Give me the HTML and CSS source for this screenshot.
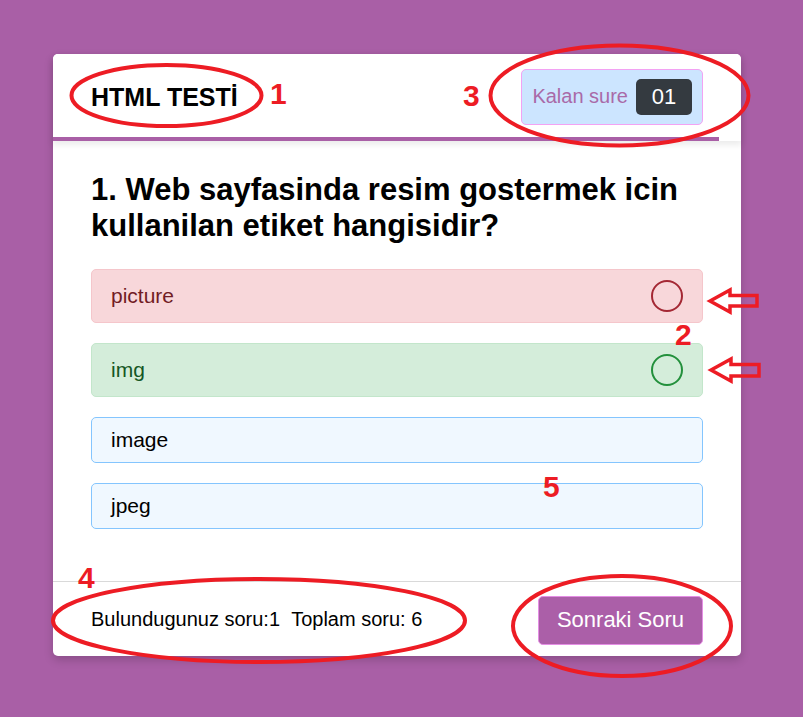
FILE: index.html
```html
<!DOCTYPE html>
<html lang="tr">
<head>
<meta charset="utf-8">
<title>HTML Testi</title>
<link rel="stylesheet" href="styles.css">
</head>
<body>
<div class="quiz-box">
  <header class="quiz-header">
    <div class="title">HTML TESTİ</div>
    <div class="timer">
      <span class="timer-text">Kalan sure</span>
      <span class="timer-sec">01</span>
    </div>
    <div class="time-line" style="width:666px"></div>
  </header>
  <section class="quiz-body">
    <div class="question">1. Web sayfasinda resim gostermek icin kullanilan etiket hangisidir?</div>
    <div class="option-list">
      <div class="option incorrect"><span>picture</span><span class="icon cross"></span></div>
      <div class="option correct"><span>img</span><span class="icon tick"></span></div>
      <div class="option"><span>image</span></div>
      <div class="option"><span>jpeg</span></div>
    </div>
  </section>
  <footer class="quiz-footer">
    <div class="total">Bulundugunuz soru:1&nbsp;&nbsp;Toplam soru: 6</div>
    <button class="next-btn">Sonraki Soru</button>
  </footer>
</div>

<svg class="annotations" width="803" height="717" viewBox="0 0 803 717" xmlns="http://www.w3.org/2000/svg">
  <g fill="none" stroke="#ed1c24" stroke-width="4">
    <ellipse cx="166.5" cy="95.5" rx="95" ry="30.5"/>
    <ellipse cx="619.5" cy="95.5" rx="129" ry="50"/>
    <ellipse cx="259" cy="620.5" rx="206" ry="41.5"/>
    <ellipse cx="622" cy="626" rx="109" ry="50"/>
  </g>
  <g fill="none" stroke="#ed1c24" stroke-width="3.5" stroke-linejoin="miter">
    <path d="M710 301 L730 290 L730 295.5 L757 295.5 L757 306 L730 306 L730 312 Z"/>
    <path d="M711 370 L731 359 L731 364.5 L759 364.5 L759 376 L731 376 L731 381 Z"/>
  </g>
  <g class="num" fill="#ed1c24">
    <text x="270" y="104">1</text>
    <text x="463" y="106">3</text>
    <text x="675" y="345">2</text>
    <text x="543" y="497">5</text>
    <text x="78" y="588">4</text>
  </g>
</svg>
</body>
</html>
```

FILE: styles.css
```css
* {
  box-sizing: border-box;
}

html, body {
  margin: 0;
  padding: 0;
}

body {
  background: #a95fa6;
  font-family: "Liberation Sans", Arial, sans-serif;
  width: 803px;
  height: 717px;
  padding: 54px 0 0 53px;
  position: relative;
  overflow: hidden;
}

.quiz-box {
  width: 688px;
  background: #fff;
  border-radius: 5px;
  box-shadow: 0 4px 10px rgba(0, 0, 0, 0.18);
}

.quiz-header {
  position: relative;
  z-index: 2;
  height: 87px;
  padding: 0 38px;
  display: flex;
  align-items: center;
  justify-content: space-between;
  background: #fff;
  border-radius: 5px 5px 0 0;
  box-shadow: 0 3px 6px 1px rgba(0, 0, 0, 0.08);
}

.title {
  font-size: 25px;
  font-weight: bold;
  color: #000;
}

.timer {
  display: flex;
  align-items: center;
  gap: 8px;
  height: 56px;
  padding: 0 10px 0 10px;
  background: #cce5ff;
  border: 1px solid #f3a2f3;
  border-radius: 5px;
  margin-top: -2px;
}

.timer-text {
  font-size: 20px;
  color: #a96aa8;
}

.timer-sec {
  width: 56px;
  height: 36px;
  display: flex;
  align-items: center;
  justify-content: center;
  background: #343a40;
  color: #fff;
  font-size: 22px;
  border-radius: 5px;
}

.time-line {
  position: absolute;
  left: 0;
  bottom: 0;
  height: 4px;
  background: #a95fa6;
}

.quiz-body {
  padding: 31px 38px 12px;
}

.question {
  font-size: 31px;
  font-weight: bold;
  line-height: 36px;
  color: #000;
}

.option-list {
  margin-top: 25px;
  padding-bottom: 20px;
}

.option {
  display: flex;
  align-items: center;
  justify-content: space-between;
  padding: 10px 19px;
  margin-bottom: 20px;
  font-size: 21px;
  line-height: 24px;
  color: #000;
  background: #f0f8ff;
  border: 1px solid #84c5fe;
  border-radius: 5px;
}

.option.correct {
  color: #155724;
  background: #d4edda;
  border-color: #c3e6cb;
}

.option.incorrect {
  color: #721c24;
  background: #f8d7da;
  border-color: #f5c6cb;
}

.icon {
  width: 32px;
  height: 32px;
  border-radius: 50%;
  border: 2px solid transparent;
}

.icon.tick {
  border-color: #23903c;
  background: #d4edda;
}

.icon.cross {
  border-color: #a42834;
  background: #f8d7da;
}

.quiz-footer {
  height: 75px;
  border-top: 1px solid #d9d9d9;
  padding: 0 38px;
  display: flex;
  align-items: center;
  justify-content: space-between;
}

.total {
  font-size: 20px;
  color: #000;
}

.next-btn {
  width: 165px;
  height: 49px;
  margin-top: 2px;
  background: #ab5fa8;
  border: 1px solid #e48ee4;
  border-radius: 5px;
  color: #fff;
  font-family: "Liberation Sans", Arial, sans-serif;
  font-size: 22px;
  padding: 0;
}

.annotations {
  position: absolute;
  left: 0;
  top: 0;
  z-index: 10;
  pointer-events: none;
}

.num text {
  font-family: "Liberation Sans", Arial, sans-serif;
  font-weight: bold;
  font-size: 30px;
}
```
